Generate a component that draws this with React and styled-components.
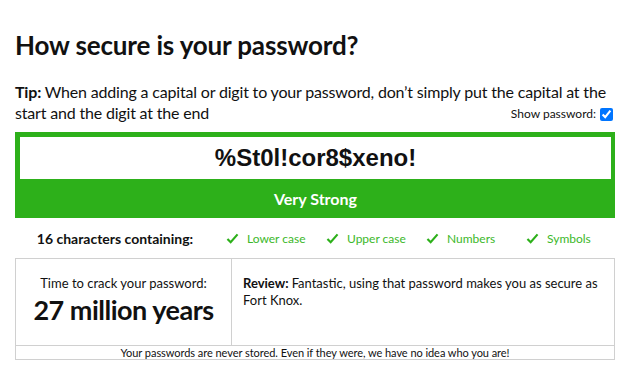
import React from 'react'
import styled, { createGlobalStyle } from 'styled-components'

const GlobalStyle = createGlobalStyle`
  body {
    margin: 0;
    background: #fff;
    font-family: Lato, "Open Sans", sans-serif;
    color: #111;
  }
`

const criteria = ['Lower case', 'Upper case', 'Numbers', 'Symbols']

function App() {
  return (
    <Page>
      <GlobalStyle />
      <Title>How secure is your password?</Title>
      <TipArea>
        <Tip>
          <b>Tip: </b>When adding a capital or digit to your password, don’t simply put the capital at the start and the digit at the end
        </Tip>
        <ShowPassword>
          Show password: <input type='checkbox' checked readOnly />
        </ShowPassword>
      </TipArea>
      <Meter>
        <PasswordInput type='text' value='%St0l!cor8$xeno!' readOnly />
        <Strength>Very Strong</Strength>
      </Meter>
      <Criteria>
        <Count>16 characters containing:</Count>
        {criteria.map((c) => (
          <Criterion key={c}>
            <Check viewBox='0 0 14 12'>
              <path d='M1.5 6.5 L5 10 L12.5 1.5' />
            </Check>
            {c}
          </Criterion>
        ))}
      </Criteria>
      <Results>
        <Crack>
          <p>Time to crack your password:</p>
          <strong>27 million years</strong>
        </Crack>
        <Review>
          <b>Review: </b>Fantastic, using that password makes you as secure as Fort Knox.
        </Review>
        <Footer>Your passwords are never stored. Even if they were, we have no idea who you are!</Footer>
      </Results>
    </Page>
  )
}

const Page = styled.div`
  width: 600px;
  padding: 0 15px;
`
const Title = styled.h1`
  margin: 30px 0 0;
  font-size: 26px;
  line-height: 31px;
  font-weight: 700;
  letter-spacing: -0.15px;
`
const TipArea = styled.div`
  display: grid;
  margin-top: 20px;
`
const Tip = styled.p`
  grid-area: 1 / 1;
  margin: 0;
  font-size: 16px;
  line-height: 21px;
  letter-spacing: -0.18px;
  b {
    font-weight: 700;
  }
`
const ShowPassword = styled.label`
  grid-area: 1 / 1;
  justify-self: end;
  align-self: end;
  display: flex;
  align-items: center;
  gap: 4px;
  font-size: 12px;
  line-height: 14px;
  margin-bottom: 2px;
  input {
    margin: 0 2px 0 0;
    width: 13px;
    height: 13px;
  }
`
const Meter = styled.div`
  margin-top: 9px;
  background: #2db01a;
  padding: 5px 4px 0 5px;
  display: flex;
  flex-direction: column;
`
const PasswordInput = styled.input`
  height: 42px;
  box-sizing: border-box;
  border: none;
  outline: none;
  text-align: center;
  font-family: "Liberation Sans", Arial, sans-serif;
  font-weight: 700;
  font-size: 24px;
  color: #111;
  background: #fff;
  padding: 0;
`
const Strength = styled.div`
  height: 39px;
  display: flex;
  align-items: center;
  justify-content: center;
  color: #fff;
  font-size: 16px;
  font-weight: 700;
`
const Criteria = styled.div`
  display: grid;
  grid-template-columns: 200px repeat(4, 100px);
  height: 40px;
  align-items: center;
`
const Count = styled.div`
  text-align: center;
  font-size: 14px;
  font-weight: 700;
`
const Criterion = styled.div`
  display: flex;
  align-items: center;
  gap: 8px;
  padding-left: 11px;
  font-size: 12px;
  color: #3cb82a;
`
const Check = styled.svg`
  width: 13px;
  height: 11px;
  fill: none;
  stroke: #2db01a;
  stroke-width: 2.4;
`
const Results = styled.div`
  display: grid;
  grid-template-columns: 216px 1fr;
  grid-template-rows: 86px auto;
  border: 1px solid #d0d0d0;
`
const Crack = styled.div`
  border-right: 1px solid #d0d0d0;
  text-align: center;
  padding-top: 16px;
  p {
    margin: 0;
    font-size: 13px;
    line-height: 17px;
  }
  strong {
    display: block;
    margin-top: 2px;
    font-size: 27px;
    line-height: 32px;
    font-weight: 700;
    letter-spacing: -0.5px;
  }
`
const Review = styled.div`
  padding: 16px 14px 0 11px;
  font-size: 13px;
  line-height: 17px;
  b {
    font-weight: 700;
  }
`
const Footer = styled.div`
  grid-column: 1 / -1;
  border-top: 1px solid #d0d0d0;
  text-align: center;
  font-size: 11px;
  line-height: 13px;
  letter-spacing: -0.05px;
`

export default App
